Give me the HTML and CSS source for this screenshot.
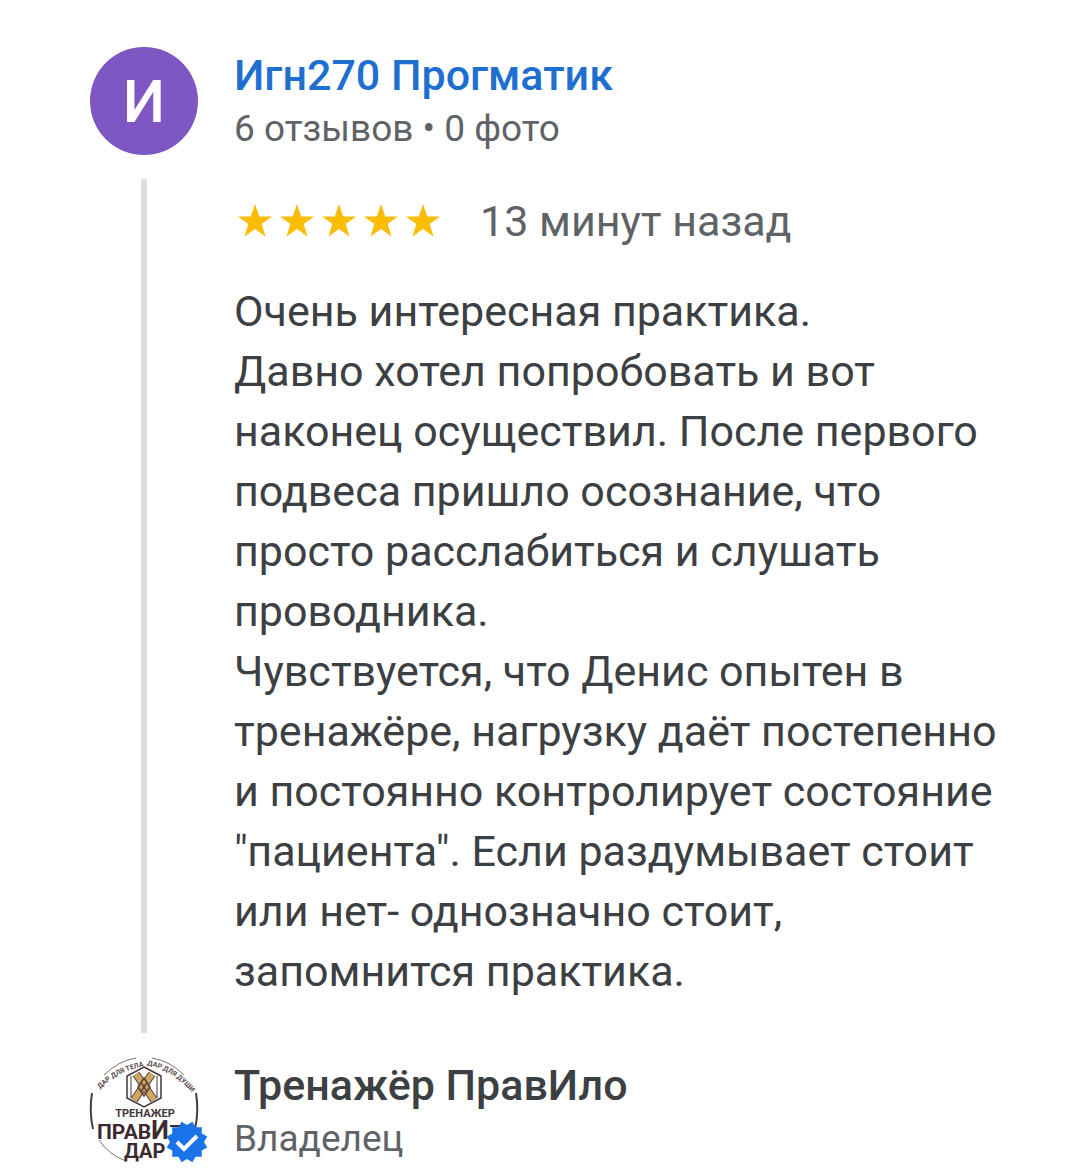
FILE: index.html
```html
<!DOCTYPE html>
<html lang="ru">
<head>
<meta charset="utf-8">
<meta name="viewport" content="width=device-width, initial-scale=1">
<title>Отзыв</title>
<link rel="stylesheet" href="styles.css">
</head>
<body>
<svg class="defs" aria-hidden="true">
  <symbol id="star" viewBox="0 0 34 34"><path d="M17 0L21.200 12.400H34L23.700 20.100L27.500 32.500L17 25L6.500 32.500L10.300 20.100L0 12.400H12.800Z"/></symbol>
</svg>
<article class="review">
  <header class="person">
    <div class="avatar" aria-hidden="true">И</div>
    <div class="info">
      <a class="name link" href="#">Игн270 Прогматик</a>
      <p class="meta">6 отзывов • 0 фото</p>
    </div>
  </header>
  <div class="thread">
    <div class="line"></div>
    <div class="content">
      <div class="rating">
        <div class="stars" role="img" aria-label="5 из 5">
          <svg class="star"><use href="#star"/></svg>
          <svg class="star"><use href="#star"/></svg>
          <svg class="star"><use href="#star"/></svg>
          <svg class="star"><use href="#star"/></svg>
          <svg class="star"><use href="#star"/></svg>
        </div>
        <span class="time">13 минут назад</span>
      </div>
      <p class="text">Очень интересная практика.<br>Давно хотел попробовать и вот наконец осуществил. После первого подвеса пришло осознание, что просто расслабиться и слушать проводника.<br>Чувствуется, что Денис опытен в тренажёре, нагрузку даёт постепенно и постоянно контролирует состояние "пациента". Если раздумывает стоит или нет- однозначно стоит, запомнится практика.</p>
    </div>
  </div>
  <footer class="person">
    <div class="logo">
      <svg class="logo-art" viewBox="0 0 108 108" aria-hidden="true">
        <defs>
          <path id="arc-left" d="M10 32Q27 14 56 9"/>
          <path id="arc-right" d="M57 8Q84 13 105 39"/>
        </defs>
        <circle cx="54" cy="54" r="53" fill="#fff"/>
        <path d="M2 36Q-1 54 3 72M106 36Q109 54 105 72" fill="none" stroke="#4a3a3c" stroke-width="2"/>
        <path d="M9 83Q19 98 36 104M14 18Q28 4 46 1M62 1Q80 4 94 18" fill="none" stroke="#7d7072"/>
        <g class="motto"><text><textPath href="#arc-left">ДАР ДЛЯ ТЕЛА</textPath></text><text><textPath href="#arc-right">ДАР ДЛЯ ДУШИ</textPath></text></g>
        <path d="M54 10L71 19V41L54 50L37 41V19Z" fill="none" stroke="#4a3439" stroke-width="1.500"/>
        <path d="M41 19V41M67 19V41" stroke="#4a3439"/>
        <path d="M46 17L64 43M62 17L44 43" fill="none" stroke="#5a3f35" stroke-width="8"/>
        <path d="M46 17L64 43M62 17L44 43" fill="none" stroke="#cda860" stroke-width="6"/>
        <path d="M54 21L60 30L54 39L48 30ZM51 25.500L57 34.500M57 25.500L51 34.500" fill="none" stroke="#5a3f35" stroke-width="1.500"/>
        <text class="logo-small" x="55" y="60">ТРЕНАЖЕР</text>
        <text class="logo-big" x="7" y="82">ПРАВ<tspan class="logo-tall">И</tspan></text>
        <path d="M80 69H90" stroke="#3b2b30" stroke-width="2"/>
        <text class="logo-dar" x="34" y="101">ДАР</text>
      </svg>
      <svg class="badge" viewBox="0 0 42 42" role="img" aria-label="Подтверждено">
        <path transform="rotate(15 21 21)" d="M21 0L25.400 4.600L31.500 2.800L33 9L39.200 10.500L37.400 16.600L42 21L37.400 25.400L39.200 31.500L33 33L31.500 39.200L25.400 37.400L21 42L16.600 37.400L10.500 39.200L9 33L2.800 31.500L4.600 25.400L0 21L4.600 16.600L2.800 10.500L9 9L10.500 2.800L16.600 4.600Z" fill="#1a73e8"/>
        <path d="M11 21L18 28L31 15" fill="none" stroke="#fff" stroke-width="4"/>
      </svg>
    </div>
    <div class="info">
      <p class="name">Тренажёр ПравИло</p>
      <p class="meta">Владелец</p>
    </div>
  </footer>
</article>
</body>
</html>
```
FILE: styles.css
```css
* {
  box-sizing: border-box;
}

body {
  margin: 0;
  background: #fff;
  color: #3c4043;
  font-family: Roboto, "Noto Sans", sans-serif;
  font-size: 43px;
}

p {
  margin: 0;
}

.defs {
  display: none;
}

.review {
  display: flex;
  flex-direction: column;
  gap: 24px;
  padding: 47px 72px 0 90px;
}

.person,
.thread {
  display: grid;
  grid-template-columns: 108px 1fr;
  column-gap: 36px;
}

.avatar {
  display: flex;
  align-items: center;
  justify-content: center;
  height: 108px;
  border-radius: 50%;
  background: #7e57c2;
  color: #fff;
  font-size: 60px;
  font-weight: 500;
}

.name {
  display: block;
  font-weight: 500;
  line-height: 56px;
}

.link {
  color: #1f6fd0;
  text-decoration: none;
}

.meta {
  color: #5f6368;
  font-size: 37px;
  line-height: 52px;
}

.line {
  justify-self: center;
  width: 6px;
  background: #dadce0;
}

.content {
  display: flex;
  flex-direction: column;
  gap: 30px;
  padding: 12px 0 32px;
}

.rating {
  display: flex;
  align-items: center;
  gap: 40px;
  padding-left: 4px;
  color: #5f6368;
  line-height: 60px;
}

.stars {
  display: flex;
  gap: 8px;
}

.star {
  width: 34px;
  height: 34px;
  fill: #fbbc04;
}

.text {
  line-height: 60px;
}

.logo {
  position: relative;
  height: 108px;
}

.logo-art {
  display: block;
  width: 108px;
  height: 108px;
  overflow: visible;
}

.motto {
  fill: #5b4a4c;
  font-size: 7px;
  font-weight: 700;
}

.logo-small {
  fill: #43373a;
  font-size: 11px;
  font-weight: 700;
  text-anchor: middle;
}

.logo-big {
  fill: #3b2b30;
  font-size: 21px;
  font-weight: 700;
}

.logo-tall {
  font-size: 25px;
}

.logo-dar {
  fill: #3b2b30;
  font-size: 20px;
  font-weight: 700;
}

.badge {
  position: absolute;
  right: -10px;
  bottom: 2px;
  width: 42px;
  height: 42px;
}
```
